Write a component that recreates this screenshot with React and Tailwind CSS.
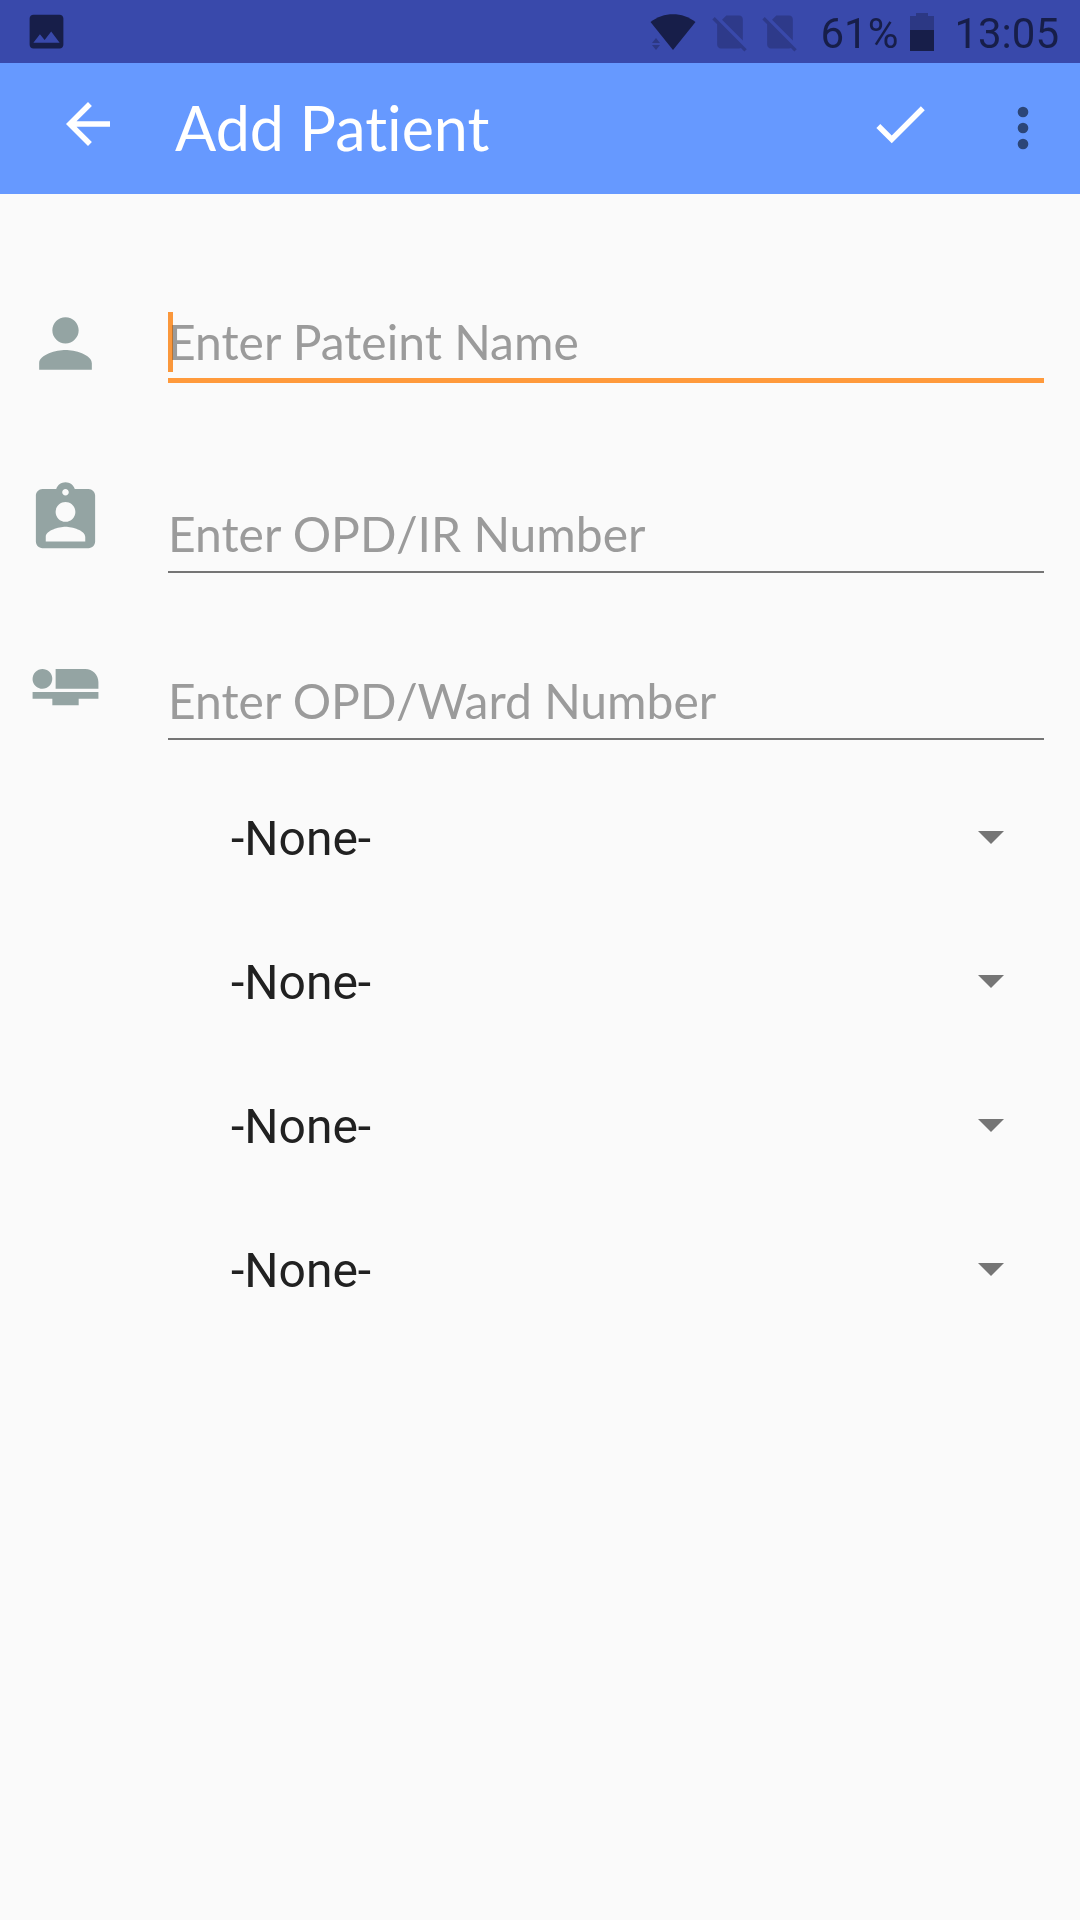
function WifiIcon() {
  return (
    <svg width="46" height="38" viewBox="0 0 46 38" aria-hidden="true">
      <path d="M0.5 9C13.500-1.500 32.500-1.500 45.500 9L23 37z" fill="#171e49" />
      <path d="M6 25l4 5H2zM6 37l4-5H2z" fill="#2c3884" />
    </svg>
  );
}

function NoSimIcon() {
  return (
    <svg width="44" height="44" viewBox="0 0 24 24" fill="#2e3a8a" aria-hidden="true">
      <path d="M18.990 5c0-1.100-.890-2-1.990-2h-7L7.660 5.340 19 16.680 18.990 5zM3.650 3.880L2.380 5.150 5 7.770V19c0 1.100.9 2 2 2h10.010c.350 0 .670-.1.960-.260l1.880 1.880 1.270-1.270L3.650 3.880z" />
    </svg>
  );
}

function BatteryIcon() {
  return (
    <svg width="24" height="38" viewBox="0 0 24 38" aria-hidden="true">
      <path d="M6 0h12v3h6v14H0V3h6z" fill="#2c3884" />
      <path d="M0 17h24v21H0z" fill="#171e49" />
    </svg>
  );
}

function StatusBar() {
  return (
    <div className="flex h-[63px] items-center bg-[#3949ab] pl-6 pr-[21px] font-[Roboto,sans-serif] text-[42px] leading-none text-[#171e49]">
      <svg width="45" height="45" viewBox="0 0 24 24" fill="currentColor" aria-hidden="true">
        <path d="M21 19V5c0-1.100-.9-2-2-2H5c-1.100 0-2 .9-2 2v14c0 1.100.9 2 2 2h14c1.100 0 2-.9 2-2zM8.500 13.500l2.500 3.010L14.500 12l4.500 6H5l3.500-4.500z" />
      </svg>
      <div className="ml-auto flex items-center">
        <WifiIcon />
        <div className="ml-3 flex gap-[6px]">
          <NoSimIcon />
          <NoSimIcon />
        </div>
        <span className="ml-[18px] pt-1">61%</span>
        <span className="ml-3">
          <BatteryIcon />
        </span>
        <span className="ml-5 pt-1">13:05</span>
      </div>
    </div>
  );
}

function AppBar() {
  return (
    <header className="flex h-[131px] bg-[#6699ff] pb-0.5 pl-[55px] pr-[25px] text-white">
      <div className="flex grow items-center pb-2">
        <button type="button" aria-label="Back">
          <svg width="66" height="66" viewBox="0 0 24 24" fill="currentColor" aria-hidden="true">
            <path d="M20 11H7.830l5.590-5.590L12 4l-8 8 8 8 1.410-1.410L7.830 13H20v-2z" />
          </svg>
        </button>
        <h1 className="ml-[54px] pt-2 font-[Lato,sans-serif] text-[61px] leading-none [font-variant-ligatures:none]">
          Add Patient
        </h1>
        <button type="button" aria-label="Save" className="ml-auto mr-[58px]">
          <svg width="66" height="66" viewBox="0 0 24 24" fill="currentColor" aria-hidden="true">
            <path d="M9 16.170L4.830 12l-1.420 1.410L9 19 21 7l-1.410-1.410z" />
          </svg>
        </button>
      </div>
      <button type="button" aria-label="More options" className="text-[#2c4678]">
        <svg width="64" height="64" viewBox="0 0 24 24" fill="currentColor" aria-hidden="true">
          <circle cx="12" cy="6" r="2" />
          <circle cx="12" cy="12" r="2" />
          <circle cx="12" cy="18" r="2" />
        </svg>
      </button>
    </header>
  );
}

const iconPaths = {
  person:
    "M12 12c2.210 0 4-1.790 4-4s-1.790-4-4-4-4 1.790-4 4 1.790 4 4 4zm0 2c-2.670 0-8 1.340-8 4v2h16v-2c0-2.660-5.330-4-8-4z",
  badge:
    "M19 3h-4.180C14.400 1.840 13.300 1 12 1c-1.300 0-2.400.840-2.820 2H5c-1.100 0-2 .9-2 2v14c0 1.100.9 2 2 2h14c1.100 0 2-.9 2-2V5c0-1.100-.9-2-2-2zm-7 0c.550 0 1 .450 1 1s-.450 1-1 1-1-.450-1-1 .450-1 1-1zm0 4c1.660 0 3 1.340 3 3s-1.340 3-3 3-3-1.340-3-3 1.340-3 3-3zm6 12H6v-1.400c0-2 4-3.100 6-3.100s6 1.100 6 3.100V19z",
  bed: "M22 11v2H9V7h9c2.210 0 4 1.790 4 4zM2 14v2h6v2h8v-2h6v-2H2zm5.140-1.900c1.160-1.190 1.140-3.080-.040-4.240-1.190-1.160-3.080-1.140-4.240.040-1.160 1.190-1.140 3.080.040 4.240 1.190 1.160 3.080 1.140 4.240-.040z",
};

function Field({ id, label, icon, active }) {
  return (
    <div className="flex">
      <label htmlFor={id} className="w-[142px] shrink-0 text-[#94a4a3]">
        <svg width="79" height="79" viewBox="0 0 24 24" fill="currentColor" role="img" aria-label={label}>
          <path d={iconPaths[icon]} />
        </svg>
      </label>
      <div className={active ? "relative grow" : "grow pt-4"}>
        <input
          id={id}
          type="text"
          placeholder={label}
          className={
            active
              ? "block h-[79px] w-full border-b-[5px] border-[#ff9a3c] bg-transparent text-[48px] leading-none caret-transparent outline-none placeholder:text-[#9b9b9b]"
              : "block h-[78px] w-full border-b-2 border-[#757575] bg-transparent text-[48px] leading-none outline-none placeholder:text-[#9b9b9b]"
          }
        />
        {active && <span className="absolute left-0 top-2 h-[60px] w-[5px] bg-[#ff9a3c] mix-blend-multiply" />}
      </div>
    </div>
  );
}

function Spinner({ label }) {
  return (
    <div className="relative">
      <select
        aria-label={label}
        className="block h-36 w-full appearance-none bg-transparent pl-[63px] pt-0.5 font-[Roboto,sans-serif] text-[48px] text-[#212121] outline-none"
      >
        <option>-None-</option>
      </select>
      <svg
        className="pointer-events-none absolute right-10 top-[65px]"
        width="26"
        height="13"
        viewBox="0 0 26 13"
        aria-hidden="true"
      >
        <path d="M0 0h26L13 13z" fill="#757575" />
      </svg>
    </div>
  );
}

const spinners = ["Department", "Category", "Type", "Status"];

export default function App() {
  return (
    <div className="min-h-screen bg-[#fafafa] font-[Lato,sans-serif]">
      <StatusBar />
      <AppBar />
      <form className="pl-[26px] pr-9 pt-[110px]">
        <Field id="name" label="Enter Pateint Name" icon="person" active />
        <div className="mt-24">
          <Field id="opd" label="Enter OPD/IR Number" icon="badge" />
        </div>
        <div className="mt-[73px]">
          <Field id="ward" label="Enter OPD/Ward Number" icon="bed" />
        </div>
        <div className="ml-[142px] mt-[26px]">
          {spinners.map((name) => (
            <Spinner key={name} label={name} />
          ))}
        </div>
      </form>
    </div>
  );
}
